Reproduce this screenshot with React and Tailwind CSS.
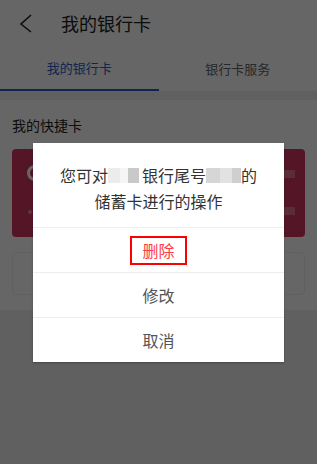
import React from "react";

const font = { fontFamily: '"Noto Sans CJK SC", "Noto Sans", sans-serif' };

function Header() {
    return (
        <div className="flex items-center h-[45px] bg-white">
            <svg className="ml-[16px]" width="20" height="22" viewBox="0 0 20 22">
                <path d="M15 3 L5 12 L15 20" fill="none" stroke="#222" strokeWidth="1.6" />
            </svg>
            <span className="ml-[25px] text-[18px] leading-[24px] text-[#222]">我的银行卡</span>
        </div>
    );
}

function Tabs() {
    return (
        <div className="flex h-[46px] bg-white">
            <div className="flex flex-1 items-center justify-center border-b-2 border-[#2d5cc8] pt-[2px]">
                <span className="text-[13px] text-[#2d5cc8]">我的银行卡</span>
            </div>
            <div className="flex flex-1 items-center justify-center pt-[2px]">
                <span className="text-[13px] text-[#666]">银行卡服务</span>
            </div>
        </div>
    );
}

function QuickCards() {
    return (
        <div className="flex flex-col bg-white px-[12px] pt-[15px] pb-[15px]">
            <span className="text-[14px] leading-[20px] text-[#222]">我的快捷卡</span>
            {/* card behind the dialog */}
            <div className="mt-[14px] h-[88px] rounded-[4px] bg-[#d2395f] flex">
                <div className="flex flex-col pl-[15px] pt-[16px]">
                    <div className="w-[16px] h-[16px] rounded-full border-[3px] border-white bg-[#d2395f]" />
                    <div className="mt-[29px] ml-[1px] w-[4px] h-[4px] rounded-full bg-[#e98aa2]" />
                </div>
                <div className="ml-auto flex flex-col pr-[10px] pt-[21px]">
                    <div className="w-[12px] h-[8px] bg-[#e3728f]" />
                    <div className="mt-[29px] w-[12px] h-[8px] bg-[#e3728f]" />
                </div>
            </div>
            <div className="mt-[15px] h-[43px] rounded-[4px] border border-[#f0f0f0]" />
        </div>
    );
}

function Dialog() {
    return (
        <div className="w-[251px] bg-white shadow-[0_1px_2px_rgba(0,0,0,0.25)]">
            <div className="flex flex-col items-center pt-[19px] pb-[13px] text-[16px] leading-[26px] text-[#333]">
                <div className="flex items-center">
                    <span>您可对</span>
                    <span className="inline-block w-[12px] h-[15px] bg-[#ececec]" />
                    <span className="inline-block w-[8px] h-[15px] bg-[#f5f5f5]" />
                    <span className="inline-block w-[11px] h-[15px] bg-[#c9c9c9]" />
                    <span className="ml-[3px]">银行尾号</span>
                    <span className="inline-block w-[14px] h-[15px] bg-[#d6d6d6]" />
                    <span className="inline-block w-[12px] h-[15px] bg-[#e2e2e2]" />
                    <span className="inline-block w-[9px] h-[15px] bg-[#cfcfcf]" />
                    <span>的</span>
                </div>
                <span>储蓄卡进行的操作</span>
            </div>
            <div className="flex items-center justify-center h-[45px] border-t border-[#ededed]">
                <span className="border-2 border-[#ff0000] px-[10px] text-[16px] leading-[25px] text-[#ff3b45]">删除</span>
            </div>
            <div className="flex items-center justify-center h-[45px] border-t border-[#ededed]">
                <span className="text-[16px] text-[#555]">修改</span>
            </div>
            <div className="flex items-center justify-center h-[45px] border-t border-[#ededed]">
                <span className="text-[16px] text-[#555]">取消</span>
            </div>
        </div>
    );
}

export default function App() {
    return (
        <div className="relative w-[317px] h-[464px] overflow-hidden bg-[#f0f0f0]" style={font}>
            <Header />
            <Tabs />
            <div className="h-[9px]" />
            <QuickCards />

            {/* dim overlay with action dialog */}
            <div className="absolute inset-0 bg-black/60 flex justify-center pt-[143px]">
                <div className="h-fit">
                    <Dialog />
                </div>
            </div>
        </div>
    );
}
